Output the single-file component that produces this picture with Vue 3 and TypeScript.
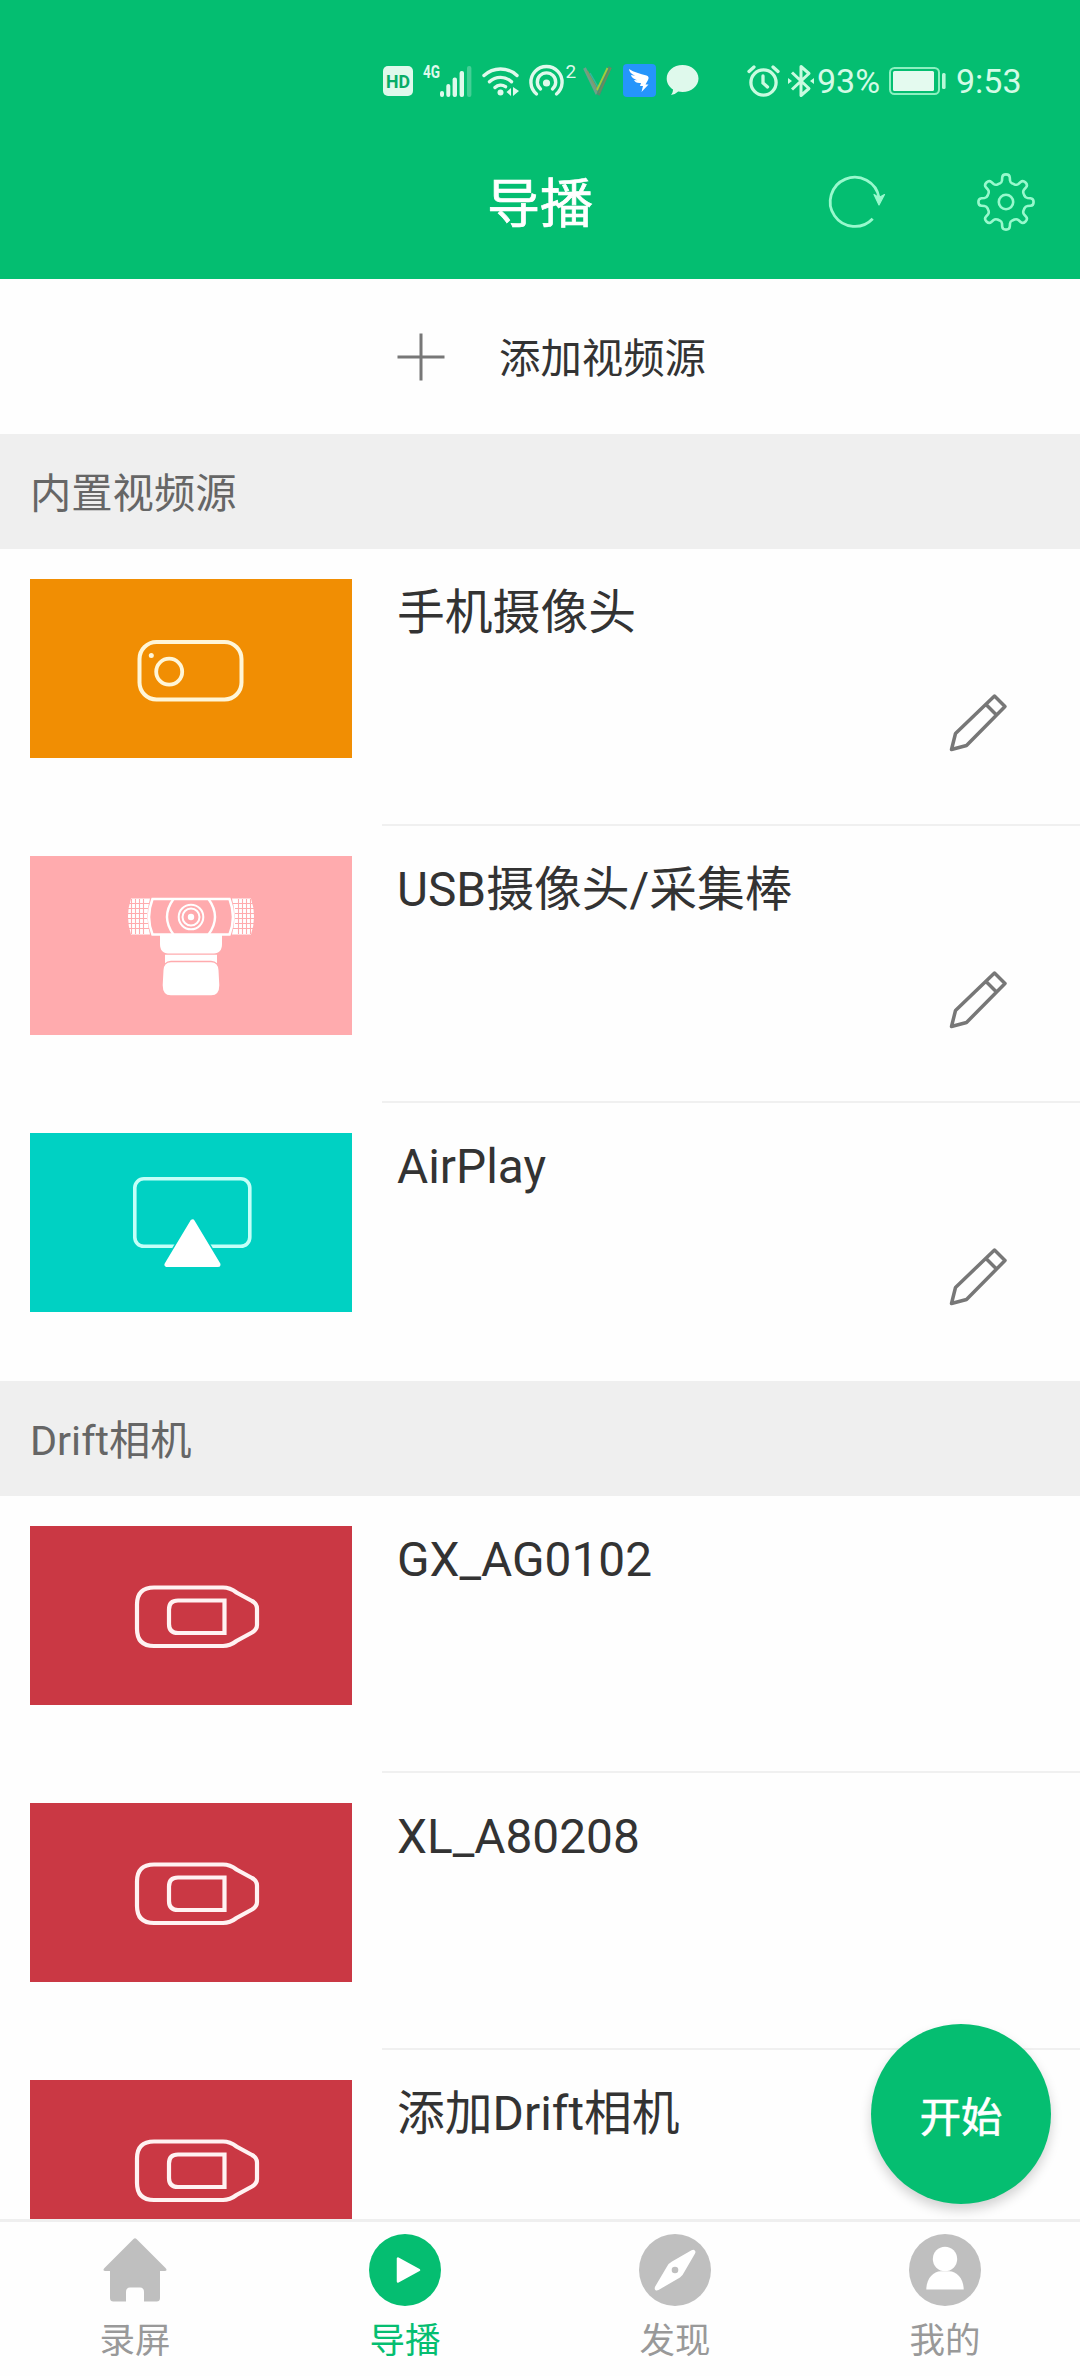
<script setup lang="ts">
type Art = 'phone' | 'usb' | 'airplay' | 'drift'
interface Source {
  name: string
  art: Art
  editable: boolean
}
interface Group {
  title: string
  items: Source[]
}
interface Tab {
  label: string
  icon: 'home' | 'play' | 'compass' | 'user'
}

const groups: Group[] = [
  {
    title: '内置视频源',
    items: [
      { name: '手机摄像头', art: 'phone', editable: true },
      { name: 'USB摄像头/采集棒', art: 'usb', editable: true },
      { name: 'AirPlay', art: 'airplay', editable: true },
    ],
  },
  {
    title: 'Drift相机',
    items: [
      { name: 'GX_AG0102', art: 'drift', editable: false },
      { name: 'XL_A80208', art: 'drift', editable: false },
      { name: '添加Drift相机', art: 'drift', editable: false },
    ],
  },
]

const tabs: Tab[] = [
  { label: '录屏', icon: 'home' },
  { label: '导播', icon: 'play' },
  { label: '发现', icon: 'compass' },
  { label: '我的', icon: 'user' },
]
const activeTab = 1

// Outline of an eight-tooth gear centred on (30, 30).
function gearPath(): string {
  let d = ''
  for (let k = 0; k < 8; k++) {
    const a = (k * Math.PI) / 4
    const p = (u: number, v: number): string =>
      `${(30 + u * Math.cos(a) - v * Math.sin(a)).toFixed(2)} ${(30 + u * Math.sin(a) + v * Math.cos(a)).toFixed(2)}`
    d += `${k === 0 ? 'M' : 'A19.4 19.4 0 0 1 '}${p(18.4, -6.4)}`
    d += `Q${p(19.4, -4.2)} ${p(21.5, -4)}L${p(24.5, -3.8)}`
    d += `Q${p(27.6, -3.6)} ${p(27.6, 0)}Q${p(27.6, 3.6)} ${p(24.5, 3.8)}`
    d += `L${p(21.5, 4)}Q${p(19.4, 4.2)} ${p(18.4, 6.4)}`
  }
  return d + `A19.4 19.4 0 0 1 ${(30 + 18.4).toFixed(2)} ${(30 - 6.4).toFixed(2)}Z`
}
const gear = gearPath()
</script>

<template>
  <div class="screen">
    <header class="top">
      <div class="status">
        <svg class="s-hd" width="30" height="30" viewBox="0 0 30 30">
          <rect width="30" height="30" rx="5" fill="#dff9ec" />
          <text x="15" y="22" text-anchor="middle" font-family="Roboto, sans-serif" font-weight="700" font-size="19" textLength="24" lengthAdjust="spacingAndGlyphs" fill="#06ac67">HD</text>
        </svg>
        <svg class="s-sig" width="50" height="44" viewBox="0 -5 50 44" fill="#dff9ec">
          <text x="0" y="14" font-family="Roboto, sans-serif" font-weight="700" font-size="19" textLength="17" lengthAdjust="spacingAndGlyphs">4G</text>
          <rect x="17" y="27" width="4" height="6" rx="2" />
          <rect x="23.3" y="20" width="4" height="13" rx="2" />
          <rect x="29.6" y="13.5" width="4.4" height="19.5" rx="2" />
          <rect x="36.6" y="7" width="4.4" height="26" rx="2" />
          <rect x="44" y="2" width="4.4" height="31" rx="2" opacity=".3" />
        </svg>
        <svg class="s-wifi" width="38" height="32" viewBox="0 0 38 32" fill="none" stroke="#dff9ec" stroke-width="3.4" stroke-linecap="round">
          <path d="M2 10.5a24 24 0 0 1 33 0M7.5 16.8a16 16 0 0 1 22 0M13 22.5a8.5 8.5 0 0 1 10.5-.8" />
          <circle cx="18.5" cy="27.5" r="3" fill="#dff9ec" stroke="none" />
          <path d="M29 23v8l-4.5-4zM31 22v9l6-5z" fill="#dff9ec" stroke="none" />
        </svg>
        <svg class="s-hot" width="48" height="45" viewBox="0 -6 48 45" fill="none" stroke="#dff9ec" stroke-width="3.4" stroke-linecap="round">
          <path d="M7.5 30a15.6 15.6 0 1 1 20 0M11.5 25a9.2 9.2 0 1 1 12 0" />
          <circle cx="17.5" cy="19" r="3.6" fill="#dff9ec" stroke="none" />
          <text x="36.5" y="14" font-family="Roboto, sans-serif" font-size="19" fill="#dff9ec" stroke="none">2</text>
        </svg>
        <svg class="s-v" width="30" height="32" viewBox="0 0 30 32" fill="none">
          <path d="M1.5 3L14 29" stroke="#6fa08a" stroke-width="3" />
          <path d="M4 6L15 26" stroke="#7f9a6c" stroke-width="2" />
          <path d="M7 8l8 14" stroke="#35b5a0" stroke-width="1.5" />
          <path d="M27 2L15 30" stroke="#528d70" stroke-width="3.5" />
          <path d="M24.5 3L14 25" stroke="#a4cc3c" stroke-width="1.8" />
          <path d="M28 3L16 28" stroke="#6f8d5a" stroke-width="1.2" />
        </svg>
        <svg class="s-ding" width="33" height="33" viewBox="0 0 33 33">
          <rect width="33" height="33" rx="4" fill="#2595fb" />
          <path d="M6 5c5 3.5 11 4.5 17.5 6.5 2.5 1 2.5 2.500 1.500 4.500l-2.500 4.500h3L18.500 28l1.500-6h-3l1-3c-4 .5-6-1-7-3l3.500.3C10 14.800 8.500 13 8 11l4 .8C8 9.800 6.300 8 6 5z" fill="#fff" />
        </svg>
        <svg class="s-chat" width="33" height="31" viewBox="0 0 33 31">
          <path d="M16.5 0C25.5 0 32.5 6 32.5 13.5S25.5 27 16.5 27c-1.500 0-3-.2-4.300-.5C10 28.500 7.500 29.700 5 30c1.300-1.500 2-3.500 2-5.500C3 22 .7 18 .7 13.500.7 6 7.500 0 16.500 0z" fill="#dff9ec" />
        </svg>
        <svg class="s-alarm" width="33" height="32" viewBox="0 0 33 32" fill="none" stroke="#c9fbe0" stroke-width="3.3" stroke-linecap="round">
          <circle cx="16.5" cy="17.5" r="12.6" />
          <path d="M16 11v7l4.5 4M2 6.5L7 2M31 6.5L26 2" />
        </svg>
        <svg class="s-bt" width="27" height="34" viewBox="0 0 27 34" fill="none" stroke="#c9fbe0" stroke-width="3">
          <path d="M4 8.5L21 24.5l-8 7V2.5l8 7L4 25.5" stroke-linejoin="round" />
          <path d="M0 14l4 3-4 3zM26 14l-4 3 4 3z" fill="#c9fbe0" stroke="none" />
        </svg>
        <span class="pct">93%</span>
        <svg class="s-bat" width="58" height="28" viewBox="0 0 58 28">
          <rect x="1" y="1" width="49" height="26" rx="4.5" fill="none" stroke="#8cf0c0" stroke-width="2" />
          <rect x="4" y="4" width="41" height="20" rx="1.5" fill="#e4faef" />
          <rect x="53" y="6" width="3.6" height="16" rx="1.5" fill="#b8f8d8" />
        </svg>
        <span class="clock">9:53</span>
      </div>
      <div class="bar">
        <div class="side"></div>
        <h1>导播</h1>
        <div class="side actions">
          <svg width="60" height="60" viewBox="0 0 60 60" fill="none" stroke="#98f9cd" stroke-width="2.8">
            <path d="M47.7 46.7A24.6 24.6 0 1 1 54 25.5" />
            <path d="M49 22.5l5 10.5L59.5 22.5l-5.500 3z" fill="#98f9cd" stroke-width="1.2" stroke-linejoin="round" />
          </svg>
          <svg width="60" height="60" viewBox="0 0 60 60" fill="none" stroke="#98f9cd" stroke-width="2.6">
            <path :d="gear" />
            <circle cx="30" cy="30" r="7.2" />
          </svg>
        </div>
      </div>
    </header>

    <button class="add">
      <svg width="48" height="48" viewBox="0 0 48 48" stroke="#777" stroke-width="3">
        <path d="M24 .5v47M.5 24h47" />
      </svg>
      <span>添加视频源</span>
    </button>

    <main class="list">
      <section v-for="g in groups" :key="g.title">
        <h2>{{ g.title }}</h2>
        <div v-for="s in g.items" :key="s.name" class="row">
          <div class="thumb" :class="s.art">
            <svg width="322" height="179" viewBox="0 0 322 179" fill="none" stroke="#fff">
              <g v-if="s.art === 'phone'" stroke="#fff6d8">
                <rect x="109.5" y="63" width="102" height="57.5" rx="17" stroke-width="4" />
                <circle cx="139.2" cy="92.7" r="13" stroke-width="3.8" />
                <circle cx="121.3" cy="76.5" r="2.5" fill="#fff6d8" stroke="none" />
              </g>
              <g v-else-if="s.art === 'usb'">
                <path d="M101 42.5h19q-5 18 0 36h-19q-6-18 0-36zM202 42.5h19q6 18 0 36h-19q5-18 0-36z" fill="#fff" stroke="none" />
                <path d="M98 47.5h21M97 52.5h21M97 57.5h20M97 62.5h20M97 67.5h21M98 72.5h21M203 47.5h21M205 52.5h20M205 57.5h20M205 62.5h20M205 67.5h20M203 72.5h21M101.5 43v35M105.5 43v35M109.5 43v35M113.5 43v35M208.5 43v35M212.5 43v35M216.5 43v35M220.5 43v35" stroke="#ffabae" stroke-width="1.1" />
                <path d="M122.5 43h77q7 18 0 35.5h-77q-7-17.5 0-35.5z" stroke-width="2.6" />
                <path d="M143.5 43q-13 18 0 35.5M178.5 43q13 18 0 35.5" stroke-width="2.4" />
                <circle cx="161" cy="61" r="12.3" stroke-width="2" />
                <circle cx="161" cy="61" r="8.5" stroke-width="2" />
                <circle cx="161" cy="61" r="3.2" fill="#fff" stroke="none" />
                <g fill="#fff" stroke="none">
                  <path d="M130 79h62v9c0 6-3 9.5-8 9.5h-46c-5 0-8-3.5-8-9.5z" />
                  <path d="M135 98.7h52v8.5q-2-2.5-6-2.5h-40q-4 0-6 2.5z" />
                  <path d="M141 106.2h40q7 0 7.5 8l.8 15q0 10-8 10h-40.6q-8 0-8-10l.8-15q.5-8 7.5-8z" />
                </g>
              </g>
              <g v-else-if="s.art === 'airplay'">
                <rect x="104.8" y="45.8" width="115" height="67.5" rx="9" stroke="#c4fff8" stroke-width="3.6" />
                <path d="M162.5 89L137 131.5h51z" fill="#00d1c3" stroke="#00d1c3" stroke-width="8" stroke-linejoin="round" />
                <path d="M162.5 89L137 131.5h51z" fill="#fff" stroke-width="5" stroke-linejoin="round" />
              </g>
              <g v-else stroke-width="4.2" stroke="#fff2f2">
                <path d="M124 61.5h69q7 0 13.5 5l15.5 8.5q5 2.5 5 7.5v16.5q0 4.5-5 7.5l-15.5 8.5q-6.500 5-13.500 5h-69q-17 0-17-17V78.500q0-17 17-17z" />
                <path d="M148 74.5h46.5v32.5H148q-9 0-9-9V83.5q0-9 9-9z" />
              </g>
            </svg>
          </div>
          <div class="info">
            <span class="name">{{ s.name }}</span>
            <svg v-if="s.editable" class="pencil" width="60" height="60" viewBox="0 0 60 60" fill="none" stroke="#777" stroke-width="3.5" stroke-linejoin="round">
              <path d="M4.5 55.5L8.5 39.5 47.5 2 58 12.5 19.5 51.5zM38.5 10l11 11" />
            </svg>
          </div>
        </div>
      </section>
    </main>

    <button class="fab">开始</button>

    <nav>
      <a v-for="(t, i) in tabs" :key="t.label" :class="{ on: i === activeTab }">
        <svg width="72" height="72" viewBox="0 0 72 72" fill="#bfbfbf">
          <path v-if="t.icon === 'home'" d="M34.5 5q1.5-1.5 3 0L66.5 34q2.5 3-1 3H61v27q0 3.5-3.5 3.5H45V58q0-4.500-4-4.500h-10Q27 53.500 27 58v9.500H14.500Q11 67.500 11 64V37H6.500q-3.500 0-1-3z" />
          <template v-else-if="t.icon === 'play'">
            <circle cx="36" cy="36" r="36" fill="#05be71" />
            <path d="M29 24.5v23L50 36z" fill="#fff" stroke="#fff" stroke-width="2.5" stroke-linejoin="round" />
          </template>
          <template v-else-if="t.icon === 'compass'">
            <circle cx="36" cy="36" r="36" />
            <path d="M52.5 16.3q2-1.2 3.3.1t.1 3.3L45 38.5q-1 2.500-4 5L19.500 56q-2 1-3.200-.1t-.1-3.300L28 32.500q2-3.500 5-5z" fill="#fff" />
            <circle cx="36" cy="36" r="3.3" />
          </template>
          <template v-else>
            <circle cx="36" cy="36" r="36" />
            <circle cx="36" cy="25" r="12.2" fill="#fff" />
            <path d="M17.3 55.6C17.3 45 24 37.3 32 37.3h8c8 0 14.7 7.7 14.7 18.3z" fill="#fff" />
          </template>
        </svg>
        <span>{{ t.label }}</span>
      </a>
    </nav>
  </div>
</template>

<style>
body {
  margin: 0;
  background: #fff;
}
</style>

<style scoped>
.screen {
  position: relative;
  display: flex;
  flex-direction: column;
  width: 1080px;
  height: 2376px;
  overflow: hidden;
  background: #fefefe;
  color: #333;
  font-family: Roboto, "Noto Sans CJK SC", sans-serif;
}
.screen svg {
  display: block;
  flex: none;
  overflow: visible;
}
button {
  border: 0;
  padding: 0;
  font-family: inherit;
}
.top {
  flex: none;
  height: 279px;
  background: #04be71;
  color: #fff;
}
.status {
  display: flex;
  align-items: center;
  height: 124px;
  padding-top: 37px;
  padding-left: 383px;
  box-sizing: border-box;
}
.s-sig { margin-left: 10px; }
.s-wifi { margin-left: 9px; }
.s-hot { margin-left: 9px; }
.s-v { margin-left: 6px; }
.s-ding { margin-left: 10px; }
.s-chat { margin-left: 10px; }
.s-alarm { margin-left: 48px; }
.s-bt { margin-left: 8px; }
.pct,
.clock {
  font-size: 34px;
  line-height: 40px;
  color: #d3fbe6;
}
.pct { width: 62px; margin-left: 2px; }
.s-bat { margin-left: 10px; }
.clock { margin-left: 9px; }
.bar {
  display: flex;
  align-items: center;
  height: 155px;
}
.side {
  flex: none;
  width: 487px;
  box-sizing: border-box;
}
h1 {
  flex: none;
  width: 106px;
  margin: 0;
  padding-top: 6px;
  font-size: 53px;
  line-height: 62px;
  font-weight: 400;
  -webkit-text-stroke: 0.7px currentColor;
}
.actions {
  display: flex;
  justify-content: flex-end;
  gap: 91px;
  padding-right: 44px;
}
.add {
  display: flex;
  flex: none;
  align-items: center;
  height: 155px;
  padding-left: 397px;
  gap: 54px;
  background: transparent;
  color: #333;
  font-size: 41.4px;
  line-height: 48px;
}
.add span { padding-top: 4px; }
.list {
  flex: 1;
  min-height: 0;
  overflow: hidden;
}
h2 {
  margin: 0;
  height: 115px;
  padding: 36px 30px 0;
  box-sizing: border-box;
  background: #efefef;
  color: #666;
  font-size: 41.3px;
  line-height: 48px;
  font-weight: 400;
}
section + section { padding-top: 1px; }
.row {
  display: flex;
  height: 277px;
}
.thumb {
  flex: none;
  width: 322px;
  height: 179px;
  margin: 30px 30px 0 30px;
}
.phone { background: #f18e03; }
.usb { background: #ffabae; }
.airplay { background: #00d1c3; }
.drift { background: #ca3844; }
.info {
  display: flex;
  flex: 1;
  flex-direction: column;
  padding: 36px 73px 0 15px;
  border-bottom: 2px solid #f0f0f0;
}
.row:last-child .info { border-bottom-color: transparent; }
.name {
  font-size: 47.8px;
  line-height: 56px;
}
.pencil {
  align-self: flex-end;
  margin-top: 53px;
}
.fab {
  position: absolute;
  right: 29px;
  bottom: 172px;
  width: 180px;
  height: 180px;
  border-radius: 50%;
  background: #05be71;
  color: #fff;
  font-size: 41.3px;
  font-weight: 400;
  -webkit-text-stroke: 0.7px currentColor;
  box-shadow: 0 6px 12px rgba(0, 0, 0, .18);
}
nav {
  display: flex;
  flex: none;
  height: 157px;
  box-sizing: border-box;
  border-top: 3px solid #efefef;
  background: #fefefe;
}
nav a {
  display: flex;
  flex: 1;
  flex-direction: column;
  align-items: center;
  padding-top: 12px;
  color: #999;
  font-size: 35.5px;
  line-height: 42px;
}
nav span { margin-top: 14px; }
nav .on { color: #05be71; }
</style>
